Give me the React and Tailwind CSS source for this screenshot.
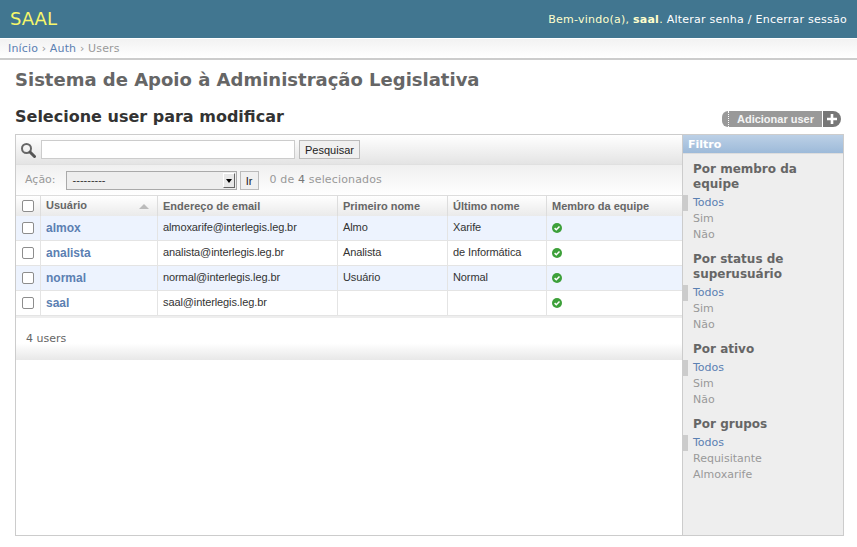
import React from 'react';

const users = [
  { name: 'almox', email: 'almoxarife@interlegis.leg.br', first: 'Almo', last: 'Xarife', alt: true },
  { name: 'analista', email: 'analista@interlegis.leg.br', first: 'Analista', last: 'de Informática' },
  { name: 'normal', email: 'normal@interlegis.leg.br', first: 'Usuário', last: 'Normal', alt: true },
  { name: 'saal', email: 'saal@interlegis.leg.br', first: '', last: '' },
];

const filters = [
  { title: ['Por membro da', 'equipe'], options: ['Todos', 'Sim', 'Não'] },
  { title: ['Por status de', 'superusuário'], options: ['Todos', 'Sim', 'Não'] },
  { title: ['Por ativo'], options: ['Todos', 'Sim', 'Não'] },
  { title: ['Por grupos'], options: ['Todos', 'Requisitante', 'Almoxarife'] },
];

function Checkbox() {
  return <input type="checkbox" className="block appearance-none w-[12px] h-[12px] bg-white border border-[#8d8d8d] rounded-[2px]" />;
}

function SearchIcon() {
  return (
    <svg width="16" height="16" viewBox="0 0 16 16" className="shrink-0">
      <circle cx="6.5" cy="6.5" r="4.5" fill="none" stroke="#666" strokeWidth="2" />
      <path d="M10 10l4.5 4.5" stroke="#555" strokeWidth="3" strokeLinecap="round" />
    </svg>
  );
}

function CheckIcon() {
  return (
    <svg width="10" height="10" viewBox="0 0 10 10" className="block">
      <circle cx="5" cy="5" r="5" fill="#3da03a" />
      <path d="M2.6 5.1l1.7 1.7 3.2-3.3" fill="none" stroke="#fff" strokeWidth="1.5" />
    </svg>
  );
}

function FilterGroup({ group }) {
  return (
    <div className="mb-[9px]">
      <h3 className="pl-[10px] mb-[3px] text-[12px] leading-[15px] font-bold text-[#666]">
        {group.title.map((line) => <div key={line}>{line}</div>)}
      </h3>
      <ul>
        {group.options.map((opt, i) => (
          <li key={opt} className={i === 0
            ? 'h-[16px] pl-[5px] border-l-[5px] border-[#ccc] text-[#5b80b2] text-[11px] leading-[16px]'
            : 'h-[16px] pl-[10px] text-[#999] text-[11px] leading-[16px]'}>{opt}</li>
        ))}
      </ul>
    </div>
  );
}

export default function App() {
  return (
    <div className="h-[547px] overflow-hidden bg-white font-['DejaVu_Sans',sans-serif] text-[#333]">
      {/* Header */}
      <header className="h-[38px] bg-[#417690] flex items-center justify-between pl-[10px] pr-[10px]">
        <div className="text-[#f7f76a] text-[18px] leading-[38px]">SAAL</div>
        <div className="text-[11px] tracking-[0.25px] text-[#ffc] pt-[3px]">
          Bem-vindo(a), <strong className="font-bold">saal</strong>. <span className="text-white">Alterar senha / Encerrar sessão</span>
        </div>
      </header>

      {/* Breadcrumbs */}
      <div className="h-[21px] mt-[1px] border-b-2 border-[#ccc] bg-gradient-to-b from-[#f2f2f2] to-white pl-[8px] text-[11px] tracking-[0.15px] leading-[19px] text-[#999]">
        <span className="text-[#5b80b2]">Início</span> › <span className="text-[#5b80b2]">Auth</span> › Users
      </div>

      <div className="px-[15px]">
        <h1 className="mt-[9px] text-[18px] leading-[22px] font-bold text-[#666]">Sistema de Apoio à Administração Legislativa</h1>

        <div className="mt-[14px] flex items-center justify-between h-[24px]">
          <h2 className="text-[16px] leading-[20px] font-bold text-[#333]">Selecione user para modificar</h2>
          <div className="flex items-center h-[16px] mt-[4px] mr-[1px] font-['Liberation_Sans',sans-serif] text-[11px] font-bold text-white">
            <div className="h-[16px] w-[6px] rounded-l-[8px] bg-[#999]" />
            <div className="h-[16px] pl-[8px] pr-[8px] bg-[#999] border-l border-dotted border-[#fff] leading-[16px] text-[#f4f4f4]">Adicionar user</div>
            <div className="h-[16px] w-[18px] ml-[1px] rounded-r-[8px] bg-[#777] flex items-center justify-center">
              <svg width="12" height="12" viewBox="0 0 12 12"><path d="M6 1v10M1 6h10" stroke="#fff" strokeWidth="2.6" /></svg>
            </div>
          </div>
        </div>

        {/* Changelist */}
        <div className="mt-[5px] h-[402px] w-[829px] border border-[#ccc] flex">
          <div className="w-[666px] flex flex-col">
            <div className="h-[30px] flex items-center gap-[4px] pl-[4px] border-b border-[#e0e0e0] bg-gradient-to-b from-white to-[#e4e4e4]">
              <SearchIcon />
              <div className="w-[254px] h-[19px] ml-[1px] bg-white border border-[#ccc]" />
              <button className="h-[19px] px-[5px] bg-[#f0f0f0] border border-[#bbb] font-['Liberation_Sans',sans-serif] text-[11px] leading-[16px] text-[#222]">Pesquisar</button>
            </div>

            <div className="h-[31px] flex items-center pl-[9px] pt-[1px] border-b border-[#ddd] bg-gradient-to-b from-[#f0f0f0] to-white text-[11px] text-[#999]">
              <span>Ação:</span>
              <div className="ml-[10px] w-[171px] h-[19px] flex items-center justify-between pl-[6px] pr-[1px] bg-[#eee] border border-[#aaa] text-[#333]">
                <span className="font-['Liberation_Sans',sans-serif] text-[11px]">---------</span>
                <span className="w-[12px] h-[15px] flex items-center justify-center bg-[#e8e8e8] border border-t-white border-l-white border-r-[#666] border-b-[#666]">
                  <span className="w-0 h-0 border-x-[3px] border-x-transparent border-t-[4px] border-t-black" />
                </span>
              </div>
              <button className="ml-[3px] w-[19px] h-[19px] bg-[#f0f0f0] border border-[#bbb] font-['Liberation_Sans',sans-serif] text-[11px] leading-[16px] text-[#222]">Ir</button>
              <span className="ml-[11px] tracking-[0.15px]">0 de <span className="text-[#777]">4</span> selecionados</span>
            </div>

            <table className="table-fixed border-separate border-spacing-0 w-[666px]">
              <colgroup>
                <col className="w-[25px]" />
                <col className="w-[117px]" />
                <col className="w-[180px]" />
                <col className="w-[110px]" />
                <col className="w-[99px]" />
                <col />
              </colgroup>
              <thead>
                <tr className="h-[20px] bg-gradient-to-b from-white to-[#eaeaea] font-['Liberation_Sans',sans-serif] text-[11px] font-bold text-[#666] text-left">
                  <th className="border-r border-[#ddd] pl-[6px]"><Checkbox /></th>
                  <th className="border-r border-[#ddd] pl-[5px] pr-[8px]">
                    <div className="flex items-center justify-between">
                      <span className="leading-[14px] pb-[3px]">Usuário</span>
                      <span className="w-0 h-0 border-x-[5px] border-x-transparent border-b-[5px] border-b-[#bbb]" />
                    </div>
                  </th>
                  <th className="border-r border-[#ddd] pl-[5px]">Endereço de email</th>
                  <th className="border-r border-[#ddd] pl-[5px]">Primeiro nome</th>
                  <th className="border-r border-[#ddd] pl-[5px]">Último nome</th>
                  <th className="pl-[5px]">Membro da equipe</th>
                </tr>
              </thead>
              <tbody className="font-['Liberation_Sans',sans-serif] text-[11px] tracking-[-0.1px] text-[#333]">
                {users.map((u) => (
                  <tr key={u.name} className={u.alt ? 'h-[25px] bg-[#edf3fe]' : 'h-[25px] bg-white'}>
                    <td className="border-r border-b border-[#e4e4e4] pl-[6px]"><Checkbox /></td>
                    <td className="border-r border-b border-[#e4e4e4] pl-[5px] text-[12px] tracking-normal font-bold text-[#5b80b2]">{u.name}</td>
                    <td className="border-r border-b border-[#e4e4e4] pl-[5px] pb-[2px]">{u.email}</td>
                    <td className="border-r border-b border-[#e4e4e4] pl-[5px] pb-[2px]">{u.first}</td>
                    <td className="border-r border-b border-[#e4e4e4] pl-[5px] pb-[2px]">{u.last}</td>
                    <td className="border-b border-[#e4e4e4] pl-[5px]"><CheckIcon /></td>
                  </tr>
                ))}
              </tbody>
            </table>

            <div className="h-[44px] border-t-2 border-[#eee] pl-[10px] pt-[13px] bg-gradient-to-b from-white from-60% to-[#e8e8e8] text-[11px] leading-[15px] text-[#666]">
              4 users
            </div>
          </div>

          {/* Filter */}
          <aside className="w-[161px] bg-[#eee] border-l border-[#ccc]">
            <div className="h-[18px] pl-[5px] bg-gradient-to-b from-[#bcd0e6] to-[#9dbad9] text-white text-[11px] font-bold leading-[19px]">Filtro</div>
            <div className="pt-[8px] border-t border-[#ddd]">
              {filters.map((g) => <FilterGroup key={g.title[0]} group={g} />)}
            </div>
          </aside>
        </div>
      </div>
    </div>
  );
}
